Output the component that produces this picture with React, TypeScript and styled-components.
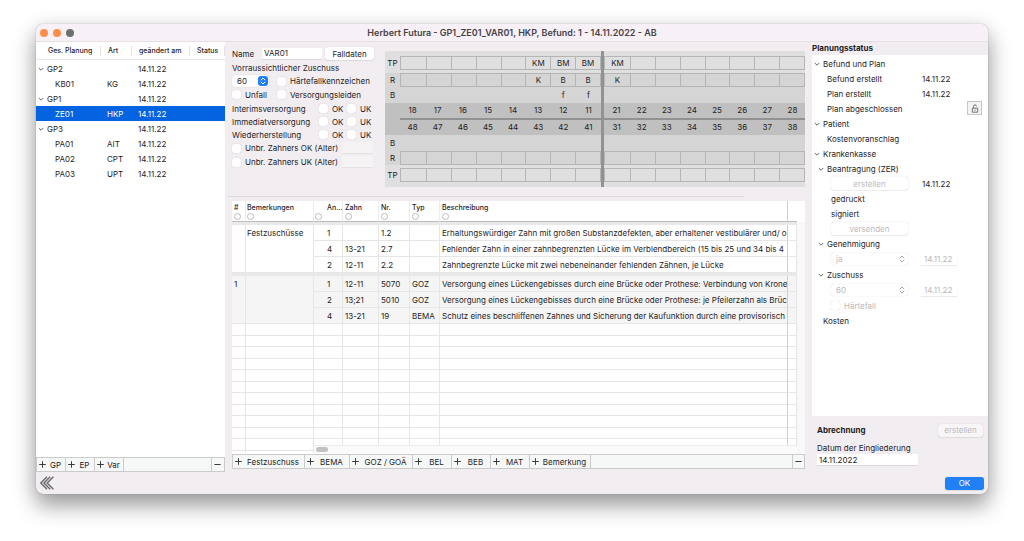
import React from "react";
import styled, { createGlobalStyle } from "styled-components";

const GlobalStyle = createGlobalStyle`
  *, *::before, *::after { box-sizing: border-box; }
  body {
    margin: 0;
    background: #fff;
    color: #1f1d1f;
    font: 8px/12px Inter, "Liberation Sans", sans-serif;
  }
  button, input, select { font: inherit; color: inherit; margin: 0; padding: 0; border: 0; }
  table { border-spacing: 0; border-collapse: separate; table-layout: fixed; width: 100%; }
  th, td { padding: 0; text-align: left; font-weight: 400; }
`;

const Page = styled.div`
  min-height: 100vh;
  padding: 24px 36px 47px;
  display: flex;
`;

const Window = styled.main`
  flex: 1;
  min-width: 0;
  display: flex;
  flex-direction: column;
  background: #f2edf1;
  border-radius: 7px;
  overflow: hidden;
  box-shadow: 0 0 1px rgba(0, 0, 0, 0.5), 0 12px 22px rgba(0, 0, 0, 0.34), 0 4px 22px rgba(0, 0, 0, 0.12);
`;

const TitleBar = styled.header`
  position: relative;
  height: 18px;
  display: flex;
  align-items: center;
  justify-content: center;
  background: #f8f0f7;
  border-bottom: 1px solid #e6e0e5;
`;

const Title = styled.h1`
  margin: 0;
  font-size: 9px;
  font-weight: 600;
  color: #464346;
  white-space: nowrap;
`;

const Lights = styled.div`
  position: absolute;
  left: 4px;
  top: 5px;
  display: flex;
  gap: 5px;
`;

const Light = styled.span<{ $color: string }>`
  width: 8px;
  height: 8px;
  border-radius: 50%;
  background: ${(p) => p.$color};
`;

const Body = styled.div`
  flex: 1;
  display: flex;
  min-height: 0;
`;

const PlanPane = styled.nav`
  width: 189px;
  flex: none;
  display: flex;
  flex-direction: column;
  background: #fff;
`;

const PlanTable = styled.table`
  flex: none;
  th {
    height: 18px;
    padding: 1px 0 0 7px;
    font-size: 7px;
    font-weight: 500;
    border-bottom: 1px solid #e6e6e6;
    background: linear-gradient(#e3e3e3, #e3e3e3) right 4px / 1px 10px no-repeat;
  }
  th:first-child { padding-left: 12px; }
  tbody::before { content: ""; display: block; height: 1px; }
`;

const PlanRow = styled.tr<{ $selected?: boolean }>`
  height: 15px;
  background: ${(p) => (p.$selected ? "#0463e1" : "none")};
  color: ${(p) => (p.$selected ? "#fff" : "inherit")};
  td { padding-left: 6px; }
`;

const PlanName = styled.span<{ $child?: boolean }>`
  display: flex;
  align-items: center;
  gap: 3px;
  margin-left: ${(p) => (p.$child ? 13 : -4)}px;
`;

const Spacer = styled.div`
  flex: 1;
`;

const Toolbar = styled.div`
  display: flex;
  flex: none;
  height: 15px;
  background: #f6f7f7;
  border: 1px solid #cbcbcb;
`;

const ToolButton = styled.button<{ $width: number; $end?: boolean }>`
  width: ${(p) => p.$width}px;
  display: flex;
  align-items: center;
  background: none;
  padding-left: 2px;
  white-space: nowrap;
  border-right: ${(p) => (p.$end ? 0 : 1)}px solid #cbcbcb;
  border-left: ${(p) => (p.$end ? 1 : 0)}px solid #cbcbcb;
  svg { flex: none; }
`;

const ToolLabel = styled.span`
  flex: 1;
  text-align: center;
`;

const CenterPane = styled.div`
  flex: 1;
  min-width: 0;
  display: flex;
  flex-direction: column;
  padding: 0 7px 3px;
`;

const TopArea = styled.section`
  display: flex;
  gap: 11px;
  height: 154px;
  align-items: flex-start;
`;

const Form = styled.form`
  width: 142px;
  flex: none;
  padding-top: 4px;
`;

const Line = styled.div<{ $h: number }>`
  height: ${(p) => p.$h}px;
  display: flex;
  align-items: center;
  white-space: nowrap;
`;

const NameLabel = styled.label`
  width: 30px;
`;

const TextField = styled.input<{ $width: number; $faded?: boolean }>`
  width: ${(p) => p.$width}px;
  height: 12px;
  padding: 0 2px;
  background: ${(p) => (p.$faded ? "#f6f3f5" : "#fff")};
  border-bottom: 1px solid ${(p) => (p.$faded ? "#e6e1e5" : "#dcd7db")};
  color: inherit;
`;

const PushButton = styled.button<{ $width?: number }>`
  width: ${(p) => p.$width ?? 49}px;
  height: 13px;
  line-height: 12px;
  border-radius: 3px;
  background: #fff;
  box-shadow: 0 0 1px rgba(0, 0, 0, 0.25), 0 1px 1px rgba(0, 0, 0, 0.06);
  &:disabled { color: #bdbabd; }
`;

const NameButton = styled(PushButton)`
  margin-left: 3px;
`;

const PrimaryButton = styled(PushButton)`
  background: #2180f6;
  color: #fff;
`;

const FadedButton = styled(PushButton)`
  background: #f8f5f7;
`;

const Check = styled.label<{ $width?: number; $muted?: boolean }>`
  width: ${(p) => (p.$width ? `${p.$width}px` : "auto")};
  display: flex;
  align-items: center;
  gap: 4px;
  color: ${(p) => (p.$muted ? "#b9b9b9" : "inherit")};
  input {
    appearance: none;
    width: 9px;
    height: 9px;
    border-radius: 2px;
    background: #fff;
    box-shadow: 0 0 1px rgba(0, 0, 0, 0.3);
  }
`;

const CareLabel = styled.span`
  width: 87px;
`;

const SelectBox = styled.span<{ $width: number; $muted?: boolean }>`
  position: relative;
  width: ${(p) => p.$width}px;
  height: 12px;
  display: flex;
  border-radius: 3px;
  background: #fff;
  color: ${(p) => (p.$muted ? "#b9b9b9" : "inherit")};
  box-shadow: 0 0 1px rgba(0, 0, 0, 0.25);
  select {
    appearance: none;
    flex: 1;
    padding-left: 5px;
    background: none;
    opacity: 1;
    line-height: 12px;
  }
`;

const Arrows = styled.span<{ $muted?: boolean }>`
  position: absolute;
  right: 1px;
  top: 1px;
  width: 10px;
  height: 10px;
  border-radius: 3px;
  background: ${(p) => (p.$muted ? "none" : "#2180f6")};
  color: ${(p) => (p.$muted ? "#a5a5a5" : "#fff")};
  pointer-events: none;
  svg { display: block; }
`;

const Chart = styled.div`
  flex: 1;
  min-width: 0;
  display: flex;
  margin-top: 9px;
  background: #dfdfdf;
`;

const ChartColumn = styled.div<{ $width?: number }>`
  flex: ${(p) => (p.$width ? `0 0 ${p.$width}px` : "1 1 0")};
  min-width: 0;
`;

const MidBar = styled.div`
  width: 3px;
  background: #929292;
`;

const bandColors = { light: "#dfdfdf", mid: "#d5d5d5", dark: "#c0c0c0" };

const Band = styled.div<{ $tone: keyof typeof bandColors; $top?: number; $bottom?: number }>`
  background: ${(p) => bandColors[p.$tone]};
  padding: ${(p) => p.$top ?? 0}px 0 ${(p) => p.$bottom ?? 0}px 0;
`;

const Cells = styled.div<{ $h: number; $boxed?: boolean }>`
  height: ${(p) => p.$h}px;
  display: grid;
  grid-auto-flow: column;
  grid-auto-columns: minmax(0, 1fr);
  text-align: center;
  line-height: ${(p) => (p.$boxed ? p.$h - 2 : p.$h)}px;
  border: ${(p) => (p.$boxed ? "1px solid #b5b5b5" : "0")};
  span + span { border-left: ${(p) => (p.$boxed ? "1px solid #b5b5b5" : "0")}; }
`;

const ToothRule = styled.div<{ $clear?: boolean }>`
  height: 2px;
  background: ${(p) => (p.$clear ? "#c0c0c0" : "#929292")};
`;

const Splitter = styled.hr`
  width: 90%;
  height: 1px;
  margin: 0 0 4px -4px;
  border: 0;
  background: #ddd8dc;
`;

const Sheet = styled.section`
  position: relative;
  flex: 1;
  min-height: 252px;
  display: flex;
  background: #fff;
`;

const SheetClip = styled.div`
  flex: 1 1 0;
  min-width: 0;
  height: 252px;
  overflow: hidden;
`;

const ScrollTrack = styled.div`
  width: 8px;
  margin-top: 21px;
  background: #f8f8f8;
`;

const BottomTrack = styled.div`
  position: absolute;
  left: 82px;
  right: 8px;
  bottom: 0;
  height: 9px;
  padding: 1px 2px;
  background: #fafafa;
  border-top: 1px solid #ececec;
`;

const Thumb = styled.div`
  width: 12px;
  height: 5px;
  border-radius: 3px;
  background: #c1c1c1;
`;

const SheetTable = styled.table`
  th {
    height: 21px;
    padding: 1px 0 0 2px;
    vertical-align: top;
    font-size: 7px;
    font-weight: 500;
    border-bottom: 1px solid #bcbcbc;
    border-right: 1px solid #ececec;
    white-space: nowrap;
  }
  th:nth-child(2), td.remark { padding-left: 1px; }
  th:nth-child(3) { padding-left: 1px; }
  th:nth-child(3) span { padding-left: 12px; }
  th:nth-child(7), td.last-text { border-right: 1px solid #cfcfcf; }
  th:last-child { border-right: 0; }
`;

const HeadLabel = styled.span`
  display: block;
  line-height: 11px;
`;

const FilterDot = styled.button`
  display: block;
  width: 7px;
  height: 7px;
  border-radius: 50%;
  border: 1px solid #bdbdbd;
  background: #fff;
`;

const Gap = styled.tr`
  height: 3px;
  td { background: #e9e9e9; }
`;

const Row = styled.tr<{ $h: number; $tinted?: boolean }>`
  height: ${(p) => p.$h}px;
  background: ${(p) => (p.$tinted ? "#f5f5f5" : "#fff")};
`;

const Cell = styled.td<{ $indent?: number; $top?: boolean }>`
  padding-left: ${(p) => p.$indent ?? 2}px;
  border-right: 1px solid #e6e6e6;
  border-bottom: 1px solid #e6e6e6;
  overflow: hidden;
  white-space: nowrap;
  vertical-align: ${(p) => (p.$top ? "top" : "middle")};
  padding-top: ${(p) => (p.$top ? 2 : 0)}px;
  line-height: 12px;
`;

const StatusPane = styled.aside`
  width: 176px;
  flex: none;
  display: flex;
  flex-direction: column;
`;

const PaneTitle = styled.h2`
  margin: 0;
  height: 13px;
  font-size: 8px;
  line-height: 12px;
  font-weight: 700;
`;

const StatusList = styled.div`
  flex: 1;
  padding-top: 1px;
  background: #fff;
`;

const StatusRow = styled.div<{ $level: number; $tall?: boolean }>`
  height: ${(p) => (p.$tall ? 16 : 15)}px;
  padding-left: ${(p) => p.$level}px;
  display: flex;
  align-items: center;
  position: relative;
  svg { flex: none; }
`;

const StatusMain = styled.div<{ $width: number }>`
  width: ${(p) => p.$width}px;
  display: flex;
  align-items: center;
  gap: 3px;
`;

const MutedDate = styled.input`
  width: 36px;
  height: 12px;
  padding-left: 3px;
  color: #b9b9b9;
  background: #fff;
  box-shadow: 0 1px 1px rgba(0, 0, 0, 0.08);
`;

const LockButton = styled.button`
  position: absolute;
  right: 6px;
  top: 0;
  width: 15px;
  height: 14px;
  display: grid;
  place-items: center;
  background: #f3f3f3;
  border: 1px solid #c6c6c6;
`;

const Billing = styled.section`
  height: 56px;
  padding: 7px 5px 0;
`;

const BillingHead = styled.div`
  display: flex;
  justify-content: space-between;
  align-items: center;
  height: 14px;
  margin-bottom: 5px;
`;

const BillingField = styled.label`
  display: flex;
  flex-direction: column;
`;

const Footer = styled.footer`
  height: 22px;
  padding: 0 4px;
  display: flex;
  align-items: center;
  justify-content: space-between;
`;

const CollapseButton = styled.button`
  display: flex;
  background: none;
`;

const Chevron = () => (
  <svg width="6" height="6" viewBox="0 0 6 6" fill="none" stroke="#666" strokeWidth="1" aria-hidden="true">
    <path d="M.8 2 3 4.2 5.2 2" />
  </svg>
);

const Plus = () => (
  <svg width="7" height="7" viewBox="0 0 7 7" stroke="#3c3c3c" strokeWidth="1" aria-hidden="true">
    <path d="M3.5 .2v6.6M.2 3.5h6.6" />
  </svg>
);

const Minus = () => (
  <svg width="7" height="7" viewBox="0 0 7 7" stroke="#3c3c3c" strokeWidth="1" aria-hidden="true">
    <path d="M.4 3.5h6.2" />
  </svg>
);

const UpDown = () => (
  <svg width="10" height="10" viewBox="0 0 10 10" fill="none" stroke="currentColor" strokeWidth="1" strokeLinecap="round" strokeLinejoin="round" aria-hidden="true">
    <path d="M3.1 3.9 5 2l1.9 1.9M3.1 6.1 5 8l1.9-1.9" />
  </svg>
);

const OpenLock = () => (
  <svg width="8" height="9" viewBox="0 0 8 9" fill="none" stroke="#666" strokeWidth="0.9" aria-hidden="true">
    <path d="M1.3 4.2h5.4v4H1.3zM2.5 4.2V2.4a1.5 1.5 0 0 1 3 0M4 5.6v1.2" />
  </svg>
);

type Plan = { name: string; art?: string; child?: boolean; selected?: boolean };

const plans: Plan[] = [
  { name: "GP2" },
  { name: "KB01", art: "KG", child: true },
  { name: "GP1" },
  { name: "ZE01", art: "HKP", child: true, selected: true },
  { name: "GP3" },
  { name: "PA01", art: "AIT", child: true },
  { name: "PA02", art: "CPT", child: true },
  { name: "PA03", art: "UPT", child: true },
];

const none = ["", "", "", "", "", "", "", ""];

type HalfData = { tp: string[]; r: string[]; b: string[]; upper: string[]; lower: string[] };

const leftHalf: HalfData = {
  tp: ["", "", "", "", "", "KM", "BM", "BM"],
  r: ["", "", "", "", "", "K", "B", "B"],
  b: ["", "", "", "", "", "", "f", "f"],
  upper: ["18", "17", "16", "15", "14", "13", "12", "11"],
  lower: ["48", "47", "46", "45", "44", "43", "42", "41"],
};

const rightHalf: HalfData = {
  tp: ["KM", "", "", "", "", "", "", ""],
  r: ["K", "", "", "", "", "", "", ""],
  b: none,
  upper: ["21", "22", "23", "24", "25", "26", "27", "28"],
  lower: ["31", "32", "33", "34", "35", "36", "37", "38"],
};

const Teeth = ({ h, boxed, items }: { h: number; boxed?: boolean; items: string[] }) => (
  <Cells $h={h} $boxed={boxed}>
    {items.map((t, i) => (
      <span key={i}>{t}</span>
    ))}
  </Cells>
);

const Half = ({ data }: { data: HalfData }) => (
  <ChartColumn>
    <Band $tone="light" $top={5} $bottom={3}><Teeth h={14} boxed items={data.tp} /></Band>
    <Band $tone="mid">
      <Teeth h={14} boxed items={data.r} />
      <Teeth h={16} items={data.b} />
    </Band>
    <Band $tone="dark"><Teeth h={15} items={data.upper} /></Band>
    <ToothRule />
    <Band $tone="dark"><Teeth h={15} items={data.lower} /></Band>
    <Band $tone="mid">
      <Teeth h={16} items={none} />
      <Teeth h={14} boxed items={none} />
    </Band>
    <Band $tone="light" $top={3} $bottom={5}><Teeth h={14} boxed items={none} /></Band>
  </ChartColumn>
);

const ChartLabels = () => (
  <ChartColumn $width={15}>
    <Band $tone="light" $top={5} $bottom={3}><Teeth h={14} items={["TP"]} /></Band>
    <Band $tone="mid">
      <Teeth h={14} items={["R"]} />
      <Teeth h={16} items={["B"]} />
    </Band>
    <Band $tone="dark"><Teeth h={15} items={[""]} /></Band>
    <ToothRule $clear />
    <Band $tone="dark"><Teeth h={15} items={[""]} /></Band>
    <Band $tone="mid">
      <Teeth h={16} items={["B"]} />
      <Teeth h={14} items={["R"]} />
    </Band>
    <Band $tone="light" $top={3} $bottom={5}><Teeth h={14} items={["TP"]} /></Band>
  </ChartColumn>
);

type Item = [count: string, tooth: string, nr: string, typ: string, text: string];

const groups: { no: string; remark: string; tinted: boolean; items: Item[] }[] = [
  {
    no: "",
    remark: "Festzuschüsse",
    tinted: false,
    items: [
      ["1", "", "1.2", "", "Erhaltungswürdiger Zahn mit großen Substanzdefekten, aber erhaltener vestibulärer und/ o"],
      ["4", "13-21", "2.7", "", "Fehlender Zahn in einer zahnbegrenzten Lücke im Verblendbereich (15 bis 25 und 34 bis 4"],
      ["2", "12-11", "2.2", "", "Zahnbegrenzte Lücke mit zwei nebeneinander fehlenden Zähnen, je Lücke"],
    ],
  },
  {
    no: "1",
    remark: "",
    tinted: true,
    items: [
      ["1", "12-11", "5070", "GOZ", "Versorgung eines Lückengebisses durch eine Brücke oder Prothese: Verbindung von Krone"],
      ["2", "13;21", "5010", "GOZ", "Versorgung eines Lückengebisses durch eine Brücke oder Prothese: je Pfeilerzahn als Brüc"],
      ["4", "13-21", "19", "BEMA", "Schutz eines beschliffenen Zahnes und Sicherung der Kaufunktion durch eine provisorisch"],
    ],
  },
];

const headings = ["#", "Bemerkungen", "An...", "Zahn", "Nr.", "Typ", "Beschreibung"];

const addButtons: [string, number][] = [
  ["Festzuschuss", 72],
  ["BEMA", 45],
  ["GOZ / GOÄ", 63],
  ["BEL", 39],
  ["BEB", 39],
  ["MAT", 39],
  ["Bemerkung", 61],
];

const Select = ({ label, value, width, muted }: { label: string; value: string; width: number; muted?: boolean }) => (
  <SelectBox $width={width} $muted={muted}>
    <select aria-label={label} defaultValue={value} disabled={muted}>
      <option>{value}</option>
    </select>
    <Arrows $muted={muted}><UpDown /></Arrows>
  </SelectBox>
);

const CaseForm = () => (
  <Form>
    <Line $h={15}>
      <NameLabel htmlFor="plan-name">Name</NameLabel>
      <TextField id="plan-name" $width={60} defaultValue="VAR01" />
      <NameButton type="button">Falldaten</NameButton>
    </Line>
    <Line $h={14}>Vorraussichtlicher Zuschuss</Line>
    <Line $h={12}>
      <Select label="Vorraussichtlicher Zuschuss" value="60" width={37} />
      <Spacer />
      <Check $width={97}><input type="checkbox" />Härtefallkennzeichen</Check>
    </Line>
    <Line $h={15}>
      <Check><input type="checkbox" />Unfall</Check>
      <Spacer />
      <Check $width={97}><input type="checkbox" />Versorgungsleiden</Check>
    </Line>
    {["Interimsversorgung", "Immediatversorgung", "Wiederherstellung"].map((name) => (
      <Line $h={13} key={name}>
        <CareLabel>{name}</CareLabel>
        <Check $width={28}><input type="checkbox" />OK</Check>
        <Check><input type="checkbox" />UK</Check>
      </Line>
    ))}
    {["OK", "UK"].map((jaw) => (
      <Line $h={14} key={jaw}>
        <Check $width={110}><input type="checkbox" />Unbr. Zahners {jaw} (Alter)</Check>
        <TextField $width={31} $faded aria-label={`Alter ${jaw}`} />
      </Line>
    ))}
  </Form>
);

const ServiceSheet = () => (
  <Sheet>
    <SheetClip>
      <SheetTable>
        <colgroup>
          <col width="14" /><col width="68" /><col width="29" /><col width="36" />
          <col width="31" /><col width="30" /><col /><col width="9" />
        </colgroup>
        <thead>
          <tr>
            {headings.map((h) => (
              <th key={h} scope="col">
                <HeadLabel>{h}</HeadLabel>
                <FilterDot type="button" aria-label={`Filter ${h}`} />
              </th>
            ))}
            <th />
          </tr>
        </thead>
        <tbody>
          {groups.map((g, gi) => (
            <React.Fragment key={gi}>
              <Gap><td colSpan={8} /></Gap>
              {g.items.map((item, i) => (
                <Row key={i} $h={16} $tinted={g.tinted}>
                  {i === 0 && <Cell rowSpan={3} $top>{g.no}</Cell>}
                  {i === 0 && <Cell rowSpan={3} $top $indent={1}>{g.remark}</Cell>}
                  <Cell $indent={13}>{item[0]}</Cell>
                  <Cell>{item[1]}</Cell>
                  <Cell>{item[2]}</Cell>
                  <Cell>{item[3]}</Cell>
                  <Cell className="last-text">{item[4]}</Cell>
                  <Cell />
                </Row>
              ))}
            </React.Fragment>
          ))}
          {Array.from({ length: 12 }, (_, r) => (
            <Row key={r} $h={r % 2 ? 11 : 12}>
              {Array.from({ length: 8 }, (_, c) => (
                <Cell key={c} className={c === 6 ? "last-text" : undefined} />
              ))}
            </Row>
          ))}
        </tbody>
      </SheetTable>
    </SheetClip>
    <ScrollTrack />
    <BottomTrack><Thumb /></BottomTrack>
  </Sheet>
);

const Status = () => (
  <StatusList>
    <StatusRow $level={2}><StatusMain $width={100}><Chevron />Befund und Plan</StatusMain></StatusRow>
    <StatusRow $level={15}><StatusMain $width={95}>Befund erstellt</StatusMain>14.11.22</StatusRow>
    <StatusRow $level={15}><StatusMain $width={95}>Plan erstellt</StatusMain>14.11.22</StatusRow>
    <StatusRow $level={15}>
      <StatusMain $width={95}>Plan abgeschlossen</StatusMain>
      <LockButton type="button" aria-label="Plan abschließen"><OpenLock /></LockButton>
    </StatusRow>
    <StatusRow $level={2}><StatusMain $width={100}><Chevron />Patient</StatusMain></StatusRow>
    <StatusRow $level={15}>Kostenvoranschlag</StatusRow>
    <StatusRow $level={2}><StatusMain $width={100}><Chevron />Krankenkasse</StatusMain></StatusRow>
    <StatusRow $level={6}><StatusMain $width={100}><Chevron />Beantragung (ZER)</StatusMain></StatusRow>
    <StatusRow $level={19}>
      <StatusMain $width={91}><PushButton type="button" $width={77} disabled>erstellen</PushButton></StatusMain>
      14.11.22
    </StatusRow>
    <StatusRow $level={19}>gedruckt</StatusRow>
    <StatusRow $level={19}>signiert</StatusRow>
    <StatusRow $level={19}><PushButton type="button" $width={77} disabled>versenden</PushButton></StatusRow>
    <StatusRow $level={6}><StatusMain $width={100}><Chevron />Genehmigung</StatusMain></StatusRow>
    <StatusRow $level={19} $tall>
      <StatusMain $width={90}><Select label="Genehmigung" value="ja" width={77} muted /></StatusMain>
      <MutedDate aria-label="Datum Genehmigung" defaultValue="14.11.22" disabled />
    </StatusRow>
    <StatusRow $level={6}><StatusMain $width={100}><Chevron />Zuschuss</StatusMain></StatusRow>
    <StatusRow $level={19} $tall>
      <StatusMain $width={90}><Select label="Zuschuss" value="60" width={77} muted /></StatusMain>
      <MutedDate aria-label="Datum Zuschuss" defaultValue="14.11.22" disabled />
    </StatusRow>
    <StatusRow $level={19}><Check $muted><input type="checkbox" disabled />Härtefall</Check></StatusRow>
    <StatusRow $level={11}>Kosten</StatusRow>
  </StatusList>
);

export default function App() {
  return (
    <>
      <GlobalStyle />
      <Page>
        <Window>
          <TitleBar>
            <Lights>
              <Light $color="#ff8e48" />
              <Light $color="#ff8e48" />
              <Light $color="#6b716b" />
            </Lights>
            <Title>Herbert Futura - GP1_ZE01_VAR01, HKP, Befund: 1 - 14.11.2022 - AB</Title>
          </TitleBar>
          <Body>
            <PlanPane>
              <PlanTable>
                <colgroup>
                  <col width="65" /><col width="31" /><col width="58" /><col />
                </colgroup>
                <thead>
                  <tr>
                    <th scope="col">Ges. Planung</th>
                    <th scope="col">Art</th>
                    <th scope="col">geändert am</th>
                    <th scope="col">Status</th>
                  </tr>
                </thead>
                <tbody>
                  {plans.map((p) => (
                    <PlanRow key={p.name} $selected={p.selected}>
                      <td><PlanName $child={p.child}>{!p.child && <Chevron />}{p.name}</PlanName></td>
                      <td>{p.art}</td>
                      <td>14.11.22</td>
                      <td />
                    </PlanRow>
                  ))}
                </tbody>
              </PlanTable>
              <Spacer />
              <Toolbar>
                {["GP", "EP", "Var"].map((t) => (
                  <ToolButton key={t} type="button" $width={29}><Plus /><ToolLabel>{t}</ToolLabel></ToolButton>
                ))}
                <Spacer />
                <ToolButton type="button" $width={13} $end aria-label="Planung entfernen"><Minus /></ToolButton>
              </Toolbar>
            </PlanPane>
            <CenterPane>
              <TopArea>
                <CaseForm />
                <Chart>
                  <ChartLabels />
                  <Half data={leftHalf} />
                  <MidBar />
                  <Half data={rightHalf} />
                </Chart>
              </TopArea>
              <Splitter />
              <ServiceSheet />
              <Toolbar>
                {addButtons.map(([t, w]) => (
                  <ToolButton key={t} type="button" $width={w}><Plus /><ToolLabel>{t}</ToolLabel></ToolButton>
                ))}
                <Spacer />
                <ToolButton type="button" $width={12} $end aria-label="Leistung entfernen"><Minus /></ToolButton>
              </Toolbar>
            </CenterPane>
            <StatusPane>
              <PaneTitle>Planungsstatus</PaneTitle>
              <Status />
              <Billing>
                <BillingHead>
                  <PaneTitle as="h3">Abrechnung</PaneTitle>
                  <FadedButton type="button" $width={45} disabled>erstellen</FadedButton>
                </BillingHead>
                <BillingField>
                  Datum der Eingliederung
                  <TextField $width={101} defaultValue="14.11.2022" />
                </BillingField>
              </Billing>
            </StatusPane>
          </Body>
          <Footer>
            <CollapseButton type="button" aria-label="Seitenleiste einklappen">
              <svg width="14" height="14" viewBox="0 0 14 14" fill="none" stroke="#6f6d6f" strokeWidth="1.5" aria-hidden="true">
                <path d="M7 .8.8 7 7 13.2M10.2.8 4 7l6.2 6.2M13.4.8 7.2 7l6.2 6.2" />
              </svg>
            </CollapseButton>
            <PrimaryButton type="button" $width={39}>OK</PrimaryButton>
          </Footer>
        </Window>
      </Page>
    </>
  );
}
